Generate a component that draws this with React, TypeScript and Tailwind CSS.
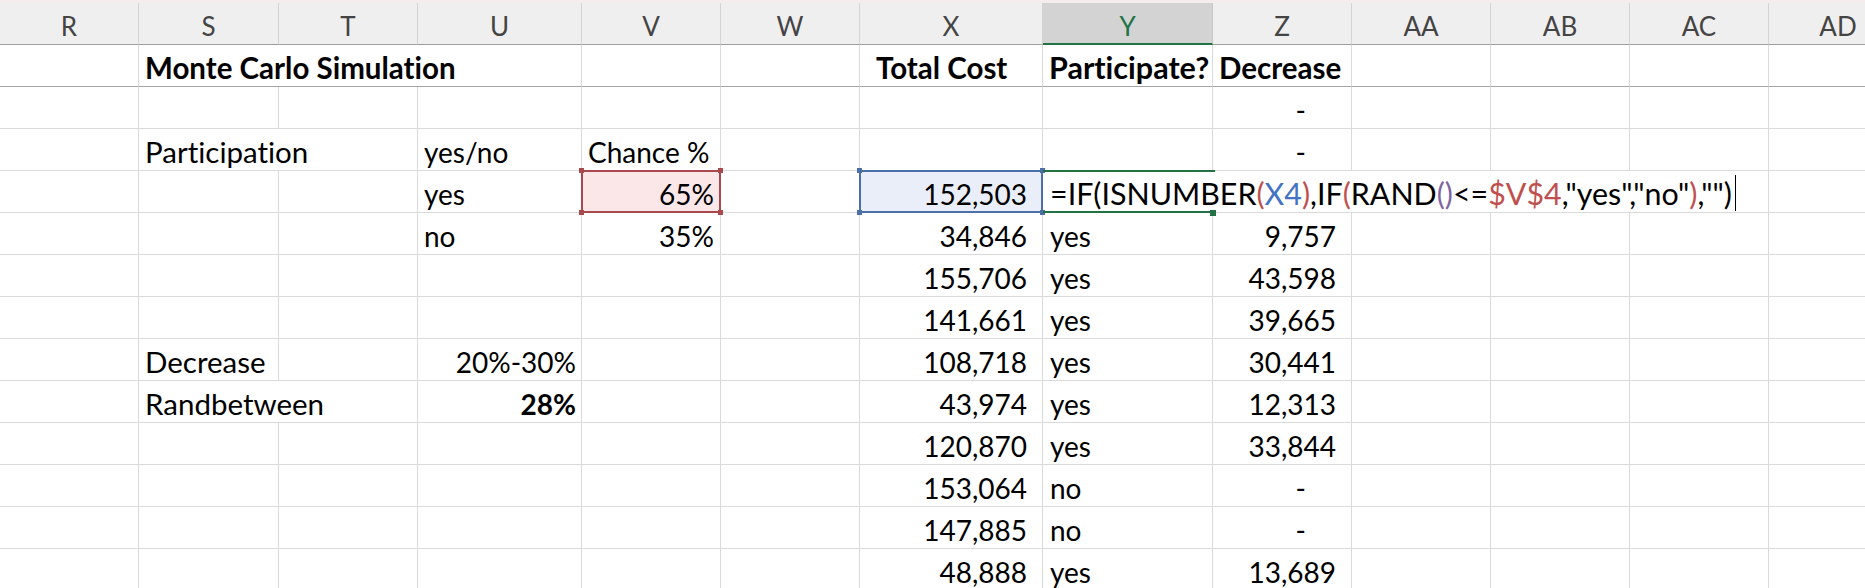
import type { ReactNode } from "react"

type Cell = { span?: 2 | 3 | 5; text?: ReactNode; cls?: string; over?: ReactNode }

const GRID =
  "grid grid-cols-[139px_140px_139px_164px_139px_139px_183px_170px_139px_139px_139px_139px_139px]"
const HEADERS = ["R", "S", "T", "U", "V", "W", "X", "Y", "Z", "AA", "AB", "AC", "AD"]
const SPAN = { 2: "col-span-2", 3: "col-span-3", 5: "col-span-5" }

const E: Cell = {}
const blank = (k: number): Cell[] => Array.from({ length: k }, () => E)
const txt = (v: string, cls = ""): Cell => ({ text: v, cls: `pl-[6px] ${cls}` })
const word = (v: string, cls = ""): Cell => ({ text: v, cls: `pl-[6px] text-[29.5px] ${cls}` })
const num = (v: string): Cell => ({ text: v, cls: "justify-end pr-[15px]" })
const dash: Cell = { text: "-", cls: "justify-end pr-[45px]" }

function RefBox({ border, dot }: { border: string; dot: string }) {
  return (
    <div className={`pointer-events-none absolute -top-px -right-px -bottom-px -left-px z-10 border-2 ${border}`}>
      <span className={`absolute -left-[4px] -top-[4px] h-[5px] w-[5px] ${dot}`} />
      <span className={`absolute -right-[4px] -top-[4px] h-[5px] w-[5px] ${dot}`} />
      <span className={`absolute -left-[4px] -bottom-[4px] h-[5px] w-[5px] ${dot}`} />
      <span className={`absolute -right-[4px] -bottom-[4px] h-[5px] w-[5px] ${dot}`} />
    </div>
  )
}

function ActiveCell() {
  return (
    <div className="pointer-events-none absolute inset-0 z-20">
      <span className="absolute -top-px left-0 h-[2px] w-[172px] bg-[#217346]" />
      <span className="absolute -bottom-px left-0 h-[2px] w-[172px] bg-[#217346]" />
      <span className="absolute -bottom-[4px] left-[167px] h-[6px] w-[6px] bg-[#217346]" />
    </div>
  )
}

const R = "text-[#c0504d]"

const formula = (
  <span className="flex items-end text-[30.4px]">
    <span>
      =IF(ISNUMBER<span className={R}>(</span>
      <span className="text-[#4472c4]">X4</span>
      <span className={R}>)</span>,IF<span className={R}>(</span>RAND
      <span className="text-[#8064a2]">()</span>&lt;=<span className={R}>$V$4</span>,"yes","no"
      <span className={R}>)</span>,"")
    </span>
    <span className="mb-[-3px] ml-[3px] inline-block h-[36px] w-px bg-black" />
  </span>
)

const rows: Cell[][] = [
  [
    E,
    { span: 3, text: "Monte Carlo Simulation", cls: "pl-[6px] text-[29.5px] font-bold" },
    E,
    E,
    word("Total Cost", "font-bold pl-[16px]"),
    word("Participate?", "font-bold text-[30.5px]"),
    word("Decrease", "font-bold"),
    ...blank(4),
  ],
  [...blank(8), dash, ...blank(4)],
  [
    E,
    { span: 2, text: "Participation", cls: "pl-[6px] text-[29.5px]" },
    txt("yes/no"),
    txt("Chance %"),
    E,
    E,
    E,
    dash,
    ...blank(4),
  ],
  [
    E,
    E,
    E,
    txt("yes"),
    {
      text: "65%",
      cls: "justify-end pr-[6px] bg-[#fbe7e8]",
      over: <RefBox border="border-[#a9494e]" dot="bg-[#a9494e]" />,
    },
    E,
    {
      text: "152,503",
      cls: "justify-end pr-[15px] bg-[#e9eef8]",
      over: <RefBox border="border-[#4d6fa9]" dot="bg-[#4d6fa9]" />,
    },
    { span: 5, text: formula, cls: "pl-[7px] bg-white", over: <ActiveCell /> },
    E,
  ],
  [E, E, E, txt("no"), { text: "35%", cls: "justify-end pr-[6px]" }, E, num("34,846"), txt("yes", "pl-[7px]"), num("9,757"), ...blank(4)],
  [...blank(6), num("155,706"), txt("yes", "pl-[7px]"), num("43,598"), ...blank(4)],
  [...blank(6), num("141,661"), txt("yes", "pl-[7px]"), num("39,665"), ...blank(4)],
  [
    E,
    word("Decrease"),
    E,
    { text: "20%-30%", cls: "justify-end pr-[5px]" },
    E,
    E,
    num("108,718"),
    txt("yes", "pl-[7px]"),
    num("30,441"),
    ...blank(4),
  ],
  [
    E,
    { span: 2, text: "Randbetween", cls: "pl-[6px] text-[29.5px]" },
    { text: "28%", cls: "justify-end pr-[5px] font-bold" },
    E,
    E,
    num("43,974"),
    txt("yes", "pl-[7px]"),
    num("12,313"),
    ...blank(4),
  ],
  [...blank(6), num("120,870"), txt("yes", "pl-[7px]"), num("33,844"), ...blank(4)],
  [...blank(6), num("153,064"), txt("no", "pl-[7px]"), dash, ...blank(4)],
  [...blank(6), num("147,885"), txt("no", "pl-[7px]"), dash, ...blank(4)],
  [...blank(6), num("48,888"), txt("yes", "pl-[7px]"), num("13,689"), ...blank(4)],
]

export default function App() {
  return (
    <div className="h-[588px] w-[1865px] overflow-hidden bg-white font-['Lato',sans-serif] text-black [font-variant-ligatures:none]">
      <div className="h-[3px] w-full bg-[#f4eded]" />
      <div className={`${GRID} h-[42px]`}>
        {HEADERS.map((h) => (
          <div
            key={h}
            className={
              h === "Y"
                ? "flex items-end justify-center border-r border-b-2 border-r-[#c8c8c8] border-b-[#217346] bg-[#d3d3d3] pb-[4px] text-[26px] leading-none text-[#217346]"
                : "flex items-end justify-center border-r border-b border-r-[#d4d4d4] border-b-[#9e9e9e] bg-[#efefef] pb-[5px] text-[26px] leading-none text-[#444]"
            }
          >
            {h}
          </div>
        ))}
      </div>
      {rows.map((row, i) => (
        <div key={i} className={`${GRID} h-[42px] text-[28px]`}>
          {row.map((c, j) => (
            <div
              key={j}
              className={`relative flex items-end whitespace-nowrap border-r border-b border-r-[#dadada] pb-[4px] leading-none ${
                i === 0 ? "border-b-[#a3a3a3]" : "border-b-[#dadada]"
              } ${c.span ? SPAN[c.span] : ""} ${c.cls ?? ""}`}
            >
              {c.text}
              {c.over}
            </div>
          ))}
        </div>
      ))}
    </div>
  )
}
